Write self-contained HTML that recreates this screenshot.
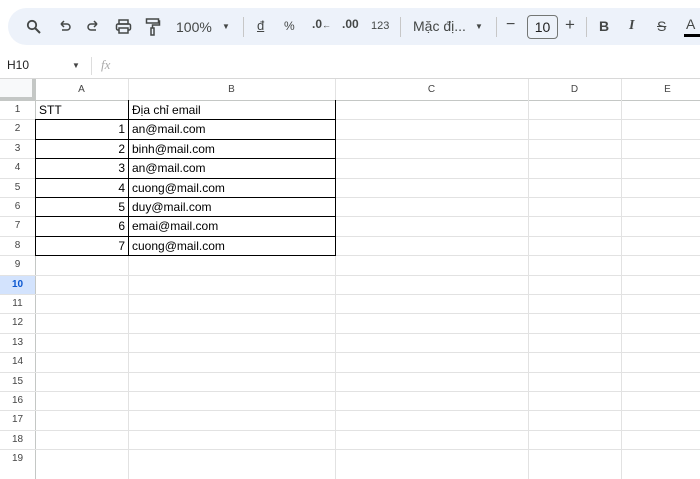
<!DOCTYPE html>
<html><head><meta charset="utf-8"><style>
*{margin:0;padding:0;box-sizing:border-box}
body{width:700px;height:467px;overflow:hidden;background:#fff;font-family:"Liberation Sans",Arial,sans-serif;position:relative;color:#000}
.a{position:absolute}
.tb{left:8px;top:8px;width:720px;height:37px;background:#edf2fa;border-radius:20px}
.ic{position:absolute;top:17px;font-size:14px;color:#444746}
.sep{position:absolute;top:17px;width:1px;height:20px;background:#c7c7c7}
.hl{position:absolute;left:0;width:700px;height:1px;background:#e2e2e2}
.vl{position:absolute;top:79px;width:1px;height:400px;background:#e2e2e2}
.rh{position:absolute;left:0;width:35px;text-align:center;font-size:10px;color:#444;}
.ch{position:absolute;top:79px;height:21px;line-height:21px;text-align:center;font-size:10px;color:#444}
.c{position:absolute;font-size:12px;line-height:19px;height:19px}
.dh{position:absolute;left:35px;width:301px;height:1px;background:#000}
.dv{position:absolute;width:1px;background:#000}
.dd{position:absolute;top:22px;font-size:8px;color:#444746}
</style></head><body>
<div class="a tb"></div>
<svg class="a" style="left:26px;top:19px" width="16" height="16" viewBox="0 0 16 16"><circle cx="6" cy="6" r="4.2" fill="none" stroke="#444746" stroke-width="1.8"/><path d="M9 9l5 5" stroke="#444746" stroke-width="2"/></svg>
<svg class="a" style="left:58px;top:20px" width="14" height="14" viewBox="0 0 14 14"><path d="M3 4h6a3 3 0 010 6H4M3 4l3-3M3 4l3 3" fill="none" stroke="#444746" stroke-width="1.5"/></svg>
<svg class="a" style="left:86px;top:20px" width="14" height="14" viewBox="0 0 14 14"><path d="M11 4H5a3 3 0 000 6h5M11 4L8 1M11 4L8 7" fill="none" stroke="#444746" stroke-width="1.5"/></svg>
<svg class="a" style="left:115px;top:19px" width="17" height="16" viewBox="0 0 17 16"><rect x="4" y="1" width="9" height="4" fill="none" stroke="#444746" stroke-width="1.5"/><rect x="1.5" y="5" width="14" height="6" rx="1.5" fill="none" stroke="#444746" stroke-width="1.5"/><rect x="4" y="9" width="9" height="5" fill="#edf2fa" stroke="#444746" stroke-width="1.5"/></svg>
<svg class="a" style="left:145px;top:18px" width="16" height="18" viewBox="0 0 16 18"><rect x="1.5" y="1" width="12" height="4" fill="none" stroke="#444746" stroke-width="1.5"/><path d="M13.5 3h1v4H7.5v3" fill="none" stroke="#444746" stroke-width="1.5"/><rect x="6" y="10" width="3" height="7" fill="none" stroke="#444746" stroke-width="1.5"/></svg>
<div class="ic" style="left:176px;top:19px;font-size:14px">100%</div>
<div class="dd" style="left:222px">▼</div>
<div class="sep" style="left:243px"></div>
<div class="ic" style="left:257px;top:18px;font-size:13px;text-decoration:underline">đ</div>
<div class="ic" style="left:284px;top:19px;font-size:12px">%</div>
<div class="ic" style="left:312px;top:17px;font-size:12px;font-weight:bold">.0<span style="font-size:9px">←</span></div>
<div class="ic" style="left:342px;top:17px;font-size:12px;font-weight:bold">.00</div>
<div class="ic" style="left:371px;top:20px;font-size:11px">123</div>
<div class="sep" style="left:400px"></div>
<div class="ic" style="left:413px;top:18px;font-size:14px">Mặc đị...</div>
<div class="dd" style="left:475px">▼</div>
<div class="sep" style="left:496px"></div>
<div class="ic" style="left:506px;top:16px;font-size:16px">−</div>
<div class="a" style="left:527px;top:15px;width:31px;height:24px;border:1px solid #747775;border-radius:4px;text-align:center;line-height:22px;font-size:14px;color:#1f1f1f">10</div>
<div class="ic" style="left:565px;top:15px;font-size:17px">+</div>
<div class="sep" style="left:586px"></div>
<div class="ic" style="left:599px;top:18px;font-size:14px;font-weight:bold">B</div>
<div class="ic" style="left:629px;top:18px;font-size:14px;font-style:italic;font-family:'Liberation Serif',serif;font-weight:bold">I</div>
<div class="ic" style="left:657px;top:18px;font-size:14px;text-decoration:line-through">S</div>
<div class="ic" style="left:686px;top:16px;font-size:14px">A</div>
<div class="a" style="left:684px;top:34px;width:16px;height:3px;background:#000"></div>

<div class="a" style="left:7px;top:58px;font-size:12px;color:#222">H10</div>
<div class="a" style="left:72px;top:61px;font-size:8px;color:#444">▼</div>
<div class="a" style="left:91px;top:57px;width:1px;height:18px;background:#ddd"></div>
<div class="a" style="left:101px;top:57px;font-size:13px;color:#aaa;font-style:italic;font-family:'Liberation Serif',serif">fx</div>

<div class="a" style="left:0;top:79px;width:700px;height:21px;background:#fff"></div>
<div class="a" style="left:0;top:79px;width:35px;height:21px;background:#f8f9fa;border-right:3px solid #c4c7c5;border-bottom:3px solid #c4c7c5"></div>
<div class="hl" style="top:78px;background:#d8d8d8"></div>
<div class="hl" style="top:100px;background:#c4c7c5"></div>
<div class="a" style="left:0;top:275px;width:35px;height:19px;background:#d3e3fd"></div>

<div class="vl" style="left:35px;background:#c4c7c5"></div>
<div class="vl" style="left:128px"></div>
<div class="vl" style="left:335px"></div>
<div class="vl" style="left:528px"></div>
<div class="vl" style="left:621px"></div>

<div class="ch" style="left:35px;width:93px">A</div>
<div class="ch" style="left:128px;width:207px">B</div>
<div class="ch" style="left:335px;width:193px">C</div>
<div class="ch" style="left:528px;width:93px">D</div>
<div class="ch" style="left:621px;width:93px">E</div>

<div class="hl" style="top:119px"></div><div class="hl" style="top:139px"></div><div class="hl" style="top:158px"></div><div class="hl" style="top:178px"></div><div class="hl" style="top:197px"></div><div class="hl" style="top:216px"></div><div class="hl" style="top:236px"></div><div class="hl" style="top:255px"></div><div class="hl" style="top:275px"></div><div class="hl" style="top:294px"></div><div class="hl" style="top:313px"></div><div class="hl" style="top:333px"></div><div class="hl" style="top:352px"></div><div class="hl" style="top:372px"></div><div class="hl" style="top:391px"></div><div class="hl" style="top:410px"></div><div class="hl" style="top:430px"></div><div class="hl" style="top:449px"></div>

<div class="rh" style="top:104px">1</div><div class="rh" style="top:123px">2</div><div class="rh" style="top:143px">3</div><div class="rh" style="top:162px">4</div><div class="rh" style="top:182px">5</div><div class="rh" style="top:201px">6</div><div class="rh" style="top:220px">7</div><div class="rh" style="top:240px">8</div><div class="rh" style="top:259px">9</div><div class="rh" style="top:279px;font-weight:bold;color:#0b57d0">10</div><div class="rh" style="top:298px">11</div><div class="rh" style="top:317px">12</div><div class="rh" style="top:337px">13</div><div class="rh" style="top:356px">14</div><div class="rh" style="top:376px">15</div><div class="rh" style="top:395px">16</div><div class="rh" style="top:414px">17</div><div class="rh" style="top:434px">18</div><div class="rh" style="top:453px">19</div>

<div class="dh" style="top:119px"></div><div class="dh" style="top:139px"></div><div class="dh" style="top:158px"></div><div class="dh" style="top:178px"></div><div class="dh" style="top:197px"></div><div class="dh" style="top:216px"></div><div class="dh" style="top:236px"></div><div class="dh" style="top:255px"></div>
<div class="dv" style="left:128px;top:100px;height:156px"></div>
<div class="dv" style="left:335px;top:100px;height:156px"></div>
<div class="dv" style="left:35px;top:119px;height:137px"></div>

<div class="c" style="left:39px;top:101px">STT</div>
<div class="c" style="left:132px;top:101px">Địa chỉ email</div>
<div class="c" style="left:35px;width:90px;text-align:right;top:120px">1</div>
<div class="c" style="left:35px;width:90px;text-align:right;top:140px">2</div>
<div class="c" style="left:35px;width:90px;text-align:right;top:159px">3</div>
<div class="c" style="left:35px;width:90px;text-align:right;top:179px">4</div>
<div class="c" style="left:35px;width:90px;text-align:right;top:198px">5</div>
<div class="c" style="left:35px;width:90px;text-align:right;top:217px">6</div>
<div class="c" style="left:35px;width:90px;text-align:right;top:237px">7</div>
<div class="c" style="left:132px;top:120px">an@mail.com</div>
<div class="c" style="left:132px;top:140px">binh@mail.com</div>
<div class="c" style="left:132px;top:159px">an@mail.com</div>
<div class="c" style="left:132px;top:179px">cuong@mail.com</div>
<div class="c" style="left:132px;top:198px">duy@mail.com</div>
<div class="c" style="left:132px;top:217px">emai@mail.com</div>
<div class="c" style="left:132px;top:237px">cuong@mail.com</div>
</body></html>
